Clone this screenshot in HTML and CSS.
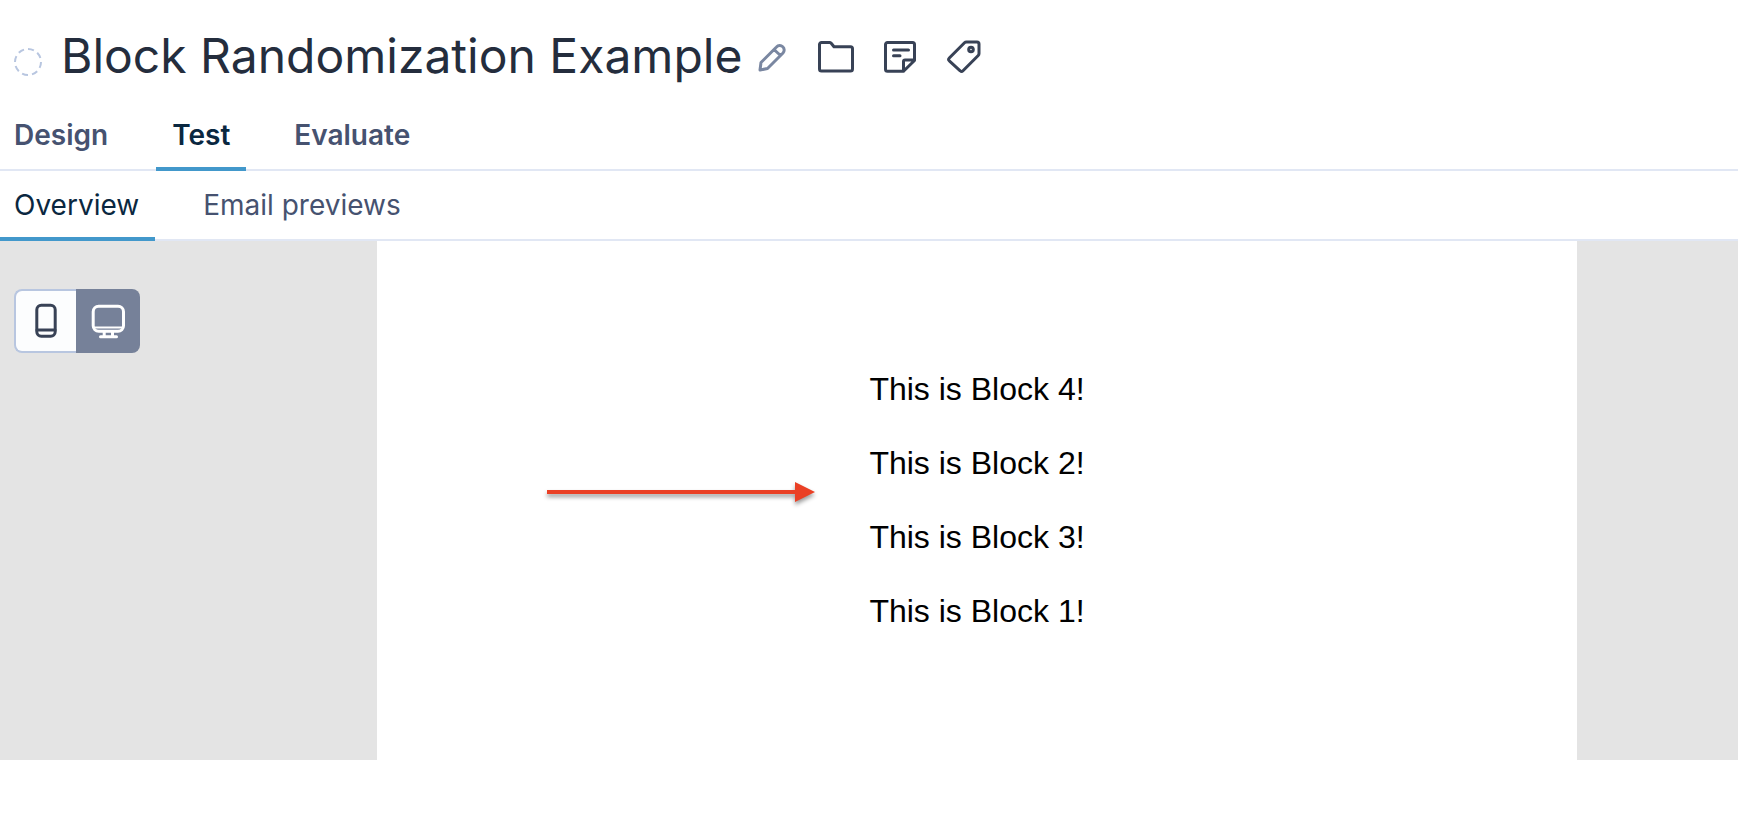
FILE: index.html
```
<!DOCTYPE html>
<html lang="en">
<head>
<meta charset="utf-8">
<title>Block Randomization Example</title>
<link rel="stylesheet" href="styles.css">
</head>
<body>
<header class="header">
	<svg class="status" width="28" height="28" viewBox="0 0 28 28"><circle cx="14" cy="14" r="13" pathLength="80" stroke-dasharray="6 4"/></svg>
	<h1 class="title">Block Randomization Example</h1>
	<button class="icon_btn edit" type="button" aria-label="Edit name">
		<svg width="28" height="32" viewBox="0 0 28 32"><path d="M2 30l1-7.500L18.500 7a4.300 4.300 0 0 1 6.500 6L9.500 28.500zM16 9.500l6.500 6"/></svg>
	</button>
	<div class="tools">
		<button class="icon_btn" type="button" aria-label="Folder">
			<svg width="36" height="36" viewBox="0 0 36 36"><path d="M1.500 6.500a2 2 0 0 1 2-2H11.500q1 0 1.700.7L16 8.700H32.500a2 2 0 0 1 2 2V31a2 2 0 0 1-2 2H3.500a2 2 0 0 1-2-2z"/></svg>
		</button>
		<button class="icon_btn" type="button" aria-label="Notes">
			<svg width="36" height="36" viewBox="0 0 36 36"><path d="M5.500 4.500H30.500a2 2 0 0 1 2 2V22.500L21.500 33.300H5.500a2 2 0 0 1-2-2V6.500a2 2 0 0 1 2-2zM32.500 22H23a1.500 1.500 0 0 0-1.500 1.500V33.300M11.500 12H26.500M11.500 17.700H18"/></svg>
		</button>
		<button class="icon_btn" type="button" aria-label="Tags">
			<svg width="36" height="36" viewBox="0 0 36 36"><path d="M20.500 4H31a2 2 0 0 1 2 2v9.500q0 1.200-.8 2L17 32.800a2 2 0 0 1-2.800 0L3.300 22.800a2 2 0 0 1 0-2.800L18.500 4.800q.8-.8 2-.8z"/><circle cx="25" cy="11.500" r="2.300"/></svg>
		</button>
	</div>
</header>
<nav class="tabs tabs_main">
	<a href="#">Design</a>
	<a href="#" class="current">Test</a>
	<a href="#">Evaluate</a>
</nav>
<nav class="tabs">
	<a href="#" class="current">Overview</a>
	<a href="#">Email previews</a>
</nav>
<main class="preview">
	<div class="side">
		<div class="devices">
			<button class="device" type="button" aria-label="Mobile">
				<svg width="36" height="36" viewBox="0 0 36 36"><rect x="8.800" y="2.200" width="18.400" height="31" rx="4.500"/><path d="M9 27H27"/></svg>
			</button>
			<button class="device device_on" type="button" aria-label="Desktop">
				<svg width="36" height="36" viewBox="0 0 36 36"><rect x="3.200" y="3.200" width="30.300" height="25" rx="5.500"/><path class="thin" d="M4 24.500H33"/><path d="M14.200 28.500V33M22.500 28.500V33M10.500 33.700H26.500"/></svg>
			</button>
		</div>
	</div>
	<div class="page">
		<svg class="arrow" width="280" height="32" viewBox="0 0 280 32"><path d="M0 14H248V6L268 16L248 26V18H0z"/></svg>
		<div class="blocks">
			<p>This is Block 4!</p>
			<p>This is Block 2!</p>
			<p>This is Block 3!</p>
			<p>This is Block 1!</p>
		</div>
	</div>
</main>
</body>
</html>
```
FILE: styles.css
```
* { margin:0; padding:0; box-sizing:border-box;}
body{ font:28px/34px Inter, sans-serif; background:#fff; color:#242d3d;}
a{ color:inherit; text-decoration:none;}
button{ border:none; background:none; cursor:pointer;}
svg{ display:block; fill:none; stroke:currentColor; stroke-width:3; stroke-linecap:round; stroke-linejoin:round;}

.header{ display:flex; align-items:center; padding:26px 14px 15px;}
.header .status{ margin:12px 19px 0 0; color:#b8c6e0; stroke-width:2; stroke-linecap:butt;}
.title{ font-size:48px; font-weight:400; line-height:60px;}
.icon_btn{ color:#384256;}
.edit{ margin:0 32px 0 16px; color:#7a87a1;}
.tools{ display:flex; gap:28px;}

.tabs{ display:flex; gap:32px; color:#465270; box-shadow:inset 0 -2px #e1e7f4;}
.tabs a{ padding:17px 16px 15px; border-bottom:4px solid transparent;}
.tabs a:first-child{ padding-left:14px;}
.tabs .current{ color:#0a2740; border-bottom-color:#4298cb;}
.tabs_main{ font-weight:600;}

.preview{ display:flex; padding-right:161px; background:#e4e4e4;}
.side{ flex:none; width:377px; padding:48px 14px;}
.devices{ display:flex;}
.device{ display:flex; align-items:center; justify-content:center; width:62px; height:64px; background:#fcfdfe; color:#384256; border:2px solid #b8c6e0; border-right:none; border-radius:8px 0 0 8px;}
.device_on{ width:64px; background:#768199; color:#fff; border:none; border-radius:0 8px 8px 0;}
.device .thin{ stroke-width:2;}

.page{ position:relative; flex:1; display:flex; justify-content:center; padding:130px 0; background:#fff;}
.blocks{ font:32px/37px "Liberation Sans", Arial, sans-serif; color:#000;}
.blocks p + p{ margin-top:37px;}
.arrow{ position:absolute; left:170px; top:235px; fill:#ea4025; stroke:none; filter:drop-shadow(0 3px 2px rgba(0,0,0,.4));}
```
